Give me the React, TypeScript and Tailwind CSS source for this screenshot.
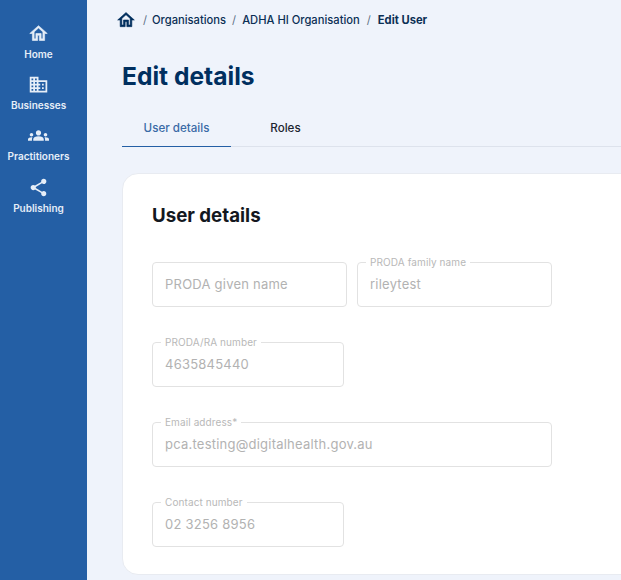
import { MdBusiness, MdGroups, MdShare } from 'react-icons/md'

function HomeIcon({ className }: { className: string }) {
  return (
    <svg viewBox="0 0 24 24" fill="currentColor" stroke="currentColor" strokeWidth={0.7} className={className}>
      <path d="M12 5.69l5 4.5V18h-2v-6H9v6H7v-7.81l5-4.5M12 3L2 12h3v8h6v-6h2v6h6v-8h3L12 3z" />
    </svg>
  )
}

const nav = [
  { label: 'Home', Icon: HomeIcon },
  { label: 'Businesses', Icon: MdBusiness },
  { label: 'Practitioners', Icon: MdGroups },
  { label: 'Publishing', Icon: MdShare },
]

function Field({ label, value, className }: { label?: string; value: string; className: string }) {
  return (
    <div className={`relative flex h-[45px] items-center rounded-[4px] border border-[#e2e2e2] px-3 ${className}`}>
      {label && (
        <span className="absolute -top-[7px] left-2 bg-white px-1 text-[10px] leading-[12px] tracking-[0.1px] text-[#b8b8b8]">
          {label}
        </span>
      )}
      <span className="pt-[1px] text-[13px] tracking-[0.23px] text-[#b2b2b2]">{value}</span>
    </div>
  )
}

export default function App() {
  return (
    <div className="flex h-[580px] w-[621px] overflow-hidden bg-[#eff3fb] font-['Inter',sans-serif]">
      <aside className="flex w-[87px] flex-none flex-col items-center bg-[#245fa5] pt-[23px] pr-[10px]">
        {nav.map(({ label, Icon }) => (
          <div key={label} className="flex h-[51.2px] flex-col items-center text-[#e6eef8]">
            <Icon className="size-[21px]" />
            <span className="mt-[3px] text-[10px] leading-[14px] font-semibold">{label}</span>
          </div>
        ))}
      </aside>

      <main className="min-w-0 flex-1 pl-[35px]">
        <nav className="flex h-[40px] items-center text-[11.2px] font-medium text-[#0b2f55]">
          <HomeIcon className="-ml-[6px] size-[20px] text-[#002e5d]" />
          <span className="mr-[5px] ml-[7px] font-normal text-[#5d7186]">/</span>
          <span>Organisations</span>
          <span className="mx-[6px] font-normal text-[#5d7186]">/</span>
          <span>ADHA HI Organisation</span>
          <span className="mx-[7px] font-normal text-[#5d7186]">/</span>
          <span className="font-bold">Edit User</span>
        </nav>

        <h1 className="mt-[19px] text-[24.6px] leading-[34px] font-bold text-[#002f5f]">Edit details</h1>

        <div className="mt-[15px] flex h-[39px] w-[520px] border-b border-[#dde2ec] text-[11.6px] font-medium">
          <div className="-mb-px flex w-[109px] items-center justify-center border-b-[1.5px] border-[#245fa5] pt-[3px] text-[#3a6aa6]">
            User details
          </div>
          <div className="flex w-[109px] items-center justify-center pt-[3px] text-[#1c2530]">Roles</div>
        </div>

        <section className="mt-[26px] h-[402px] w-[520px] rounded-[16px] border border-[#e8ebf1] bg-white pt-[30px] pl-[29px]">
          <h2 className="text-[18.7px] leading-[24px] font-bold text-[#14181f]">User details</h2>

          <div className="mt-[34px] flex flex-col gap-[35px]">
            <div className="flex gap-[10px]">
              <Field value="PRODA given name" className="w-[195px]" />
              <Field label="PRODA family name" value="rileytest" className="w-[195px]" />
            </div>
            <Field label="PRODA/RA number" value="4635845440" className="w-[192px]" />
            <Field label="Email address*" value="pca.testing@digitalhealth.gov.au" className="w-[400px]" />
            <Field label="Contact number" value="02 3256 8956" className="w-[192px]" />
          </div>
        </section>
      </main>
    </div>
  )
}
